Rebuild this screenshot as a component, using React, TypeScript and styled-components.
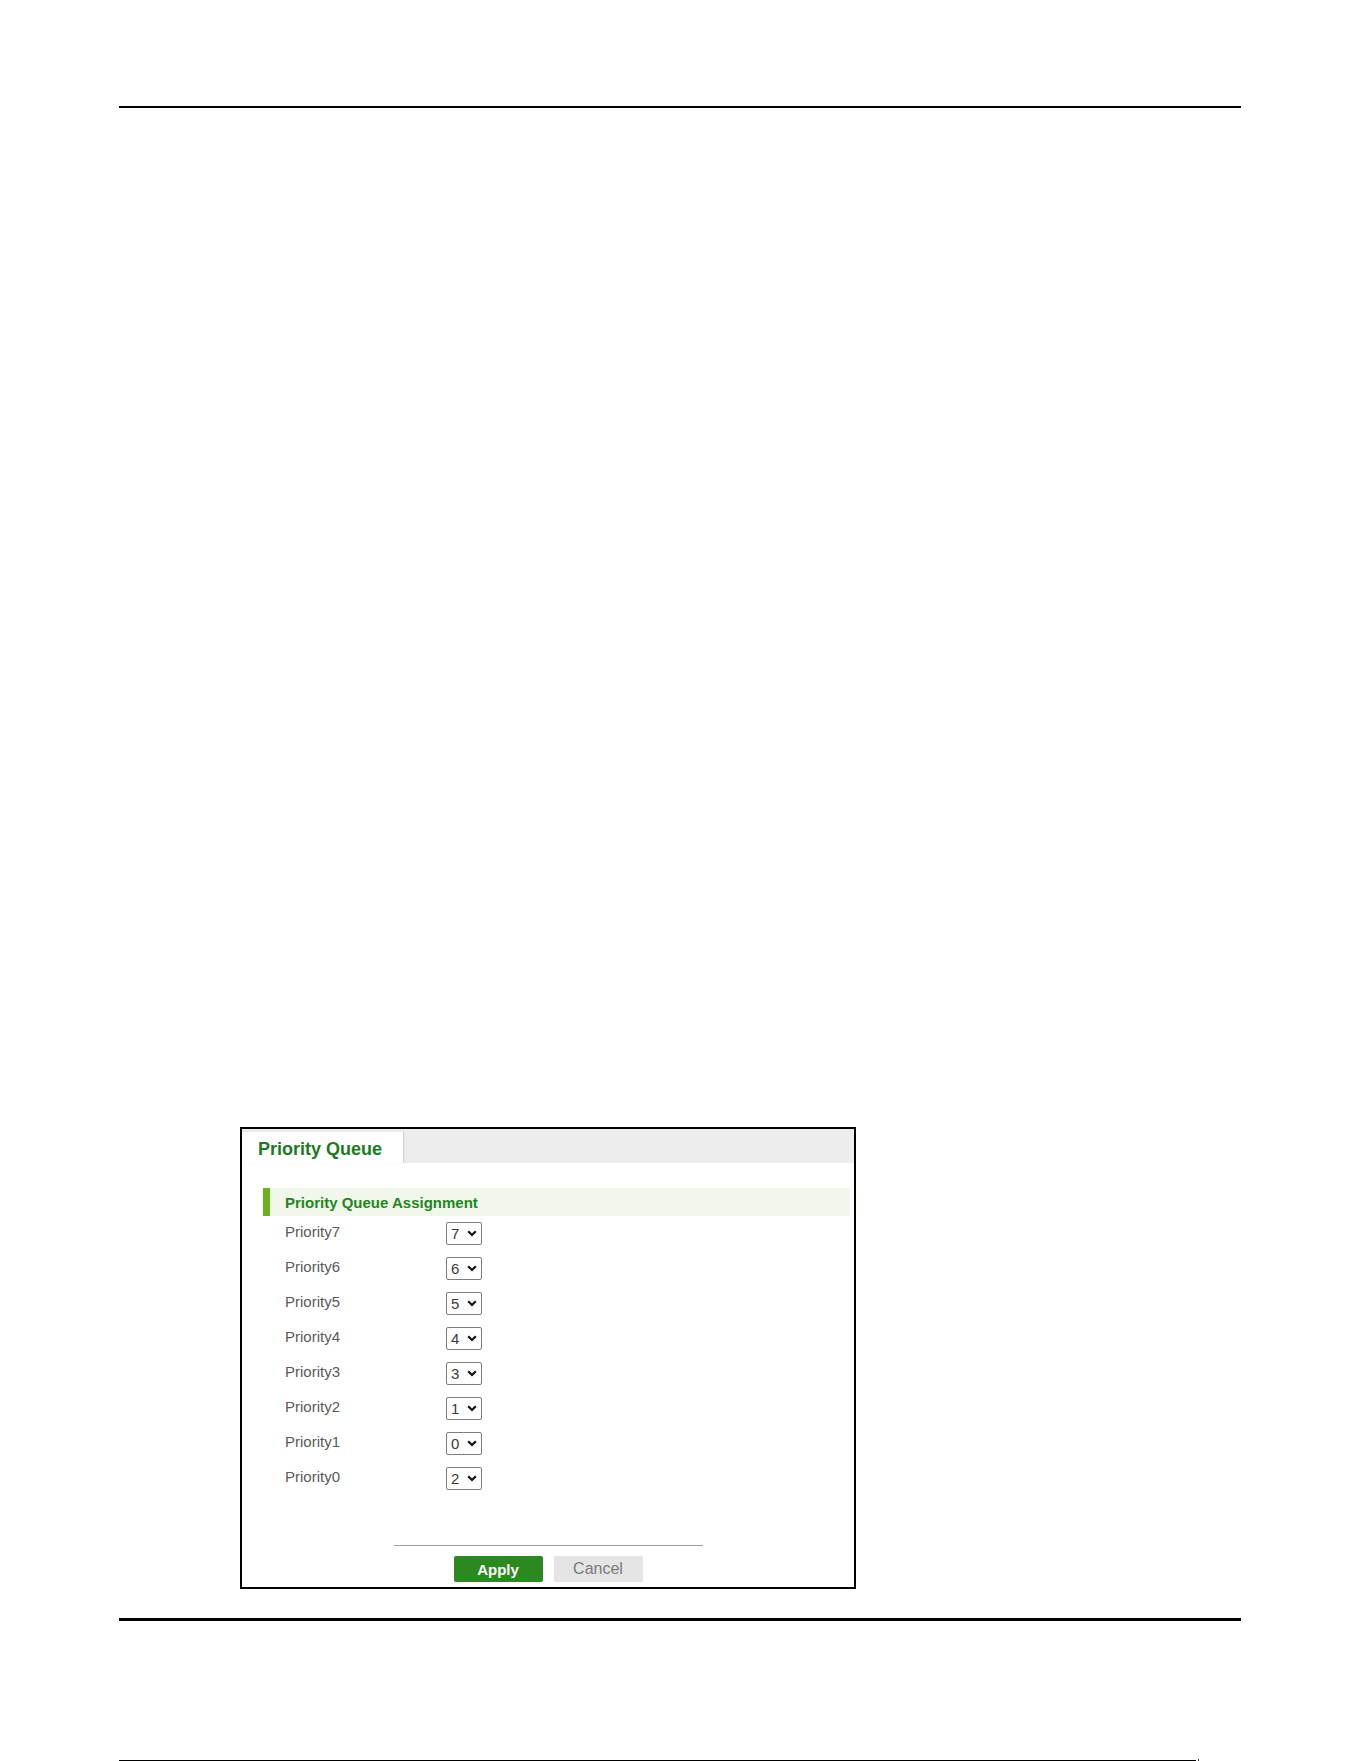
import React from 'react';
import styled, { createGlobalStyle } from 'styled-components';

const GlobalStyle = createGlobalStyle`
  html, body {
    margin: 0;
    padding: 0;
    background: #ffffff;
  }
  body {
    font-family: 'Liberation Sans', Arial, sans-serif;
  }
`;

const priorities = [
  { label: 'Priority7', value: '7' },
  { label: 'Priority6', value: '6' },
  { label: 'Priority5', value: '5' },
  { label: 'Priority4', value: '4' },
  { label: 'Priority3', value: '3' },
  { label: 'Priority2', value: '1' },
  { label: 'Priority1', value: '0' },
  { label: 'Priority0', value: '2' },
];

const Page = styled.div`
  width: 1361px;
  height: 1761px;
  box-sizing: border-box;
  padding: 106px 120px 0 119px;
  display: flex;
  flex-direction: column;
`;

const Rule = styled.div<{ $thick: number; $width?: number }>`
  height: ${(p) => p.$thick}px;
  width: ${(p) => (p.$width ? `${p.$width}px` : '100%')};
  background: #000;
  flex-shrink: 0;
`;

const Figure = styled.div`
  margin: 1019px 0 0 121px;
  width: 616px;
  height: 462px;
  box-sizing: border-box;
  border: 2px solid #000;
  display: flex;
  flex-direction: column;
`;

const TabBar = styled.div`
  height: 34px;
  background: #ededed;
  display: flex;
  align-items: flex-end;
`;

const Tab = styled.div`
  width: 161px;
  height: 31px;
  background: #fff;
  box-shadow: 1px 0 1px rgba(0, 0, 0, 0.12);
  box-sizing: border-box;
  padding: 6px 0 0 16px;
  color: #1d7a1d;
  font-size: 18px;
  font-weight: 700;
  line-height: 22px;
`;

const Body = styled.div`
  flex: 1;
  display: flex;
  flex-direction: column;
  padding: 25px 4px 5px 21px;
`;

const SectionHead = styled.div`
  height: 28px;
  background: #f1f8eb;
  border-left: 7px solid #6ab31c;
  display: flex;
  align-items: center;
  padding-left: 15px;
  color: #23861d;
  font-size: 15px;
  font-weight: 700;
`;

const Row = styled.div`
  height: 35px;
  display: flex;
  align-items: center;
  padding-left: 22px;
`;

const Label = styled.span`
  width: 161px;
  margin-top: -4px;
  color: #5a5a5a;
  font-size: 15px;
`;

const Select = styled.div`
  width: 36px;
  height: 23px;
  box-sizing: border-box;
  border: 1px solid #7d7d7d;
  border-radius: 2px;
  display: flex;
  align-items: center;
  justify-content: space-between;
  padding: 0 4px 0 4px;
  color: #3a3a3a;
  font-size: 15px;
`;

const Spacer = styled.div`
  flex: 1;
`;

const Footer = styled.div`
  display: flex;
  flex-direction: column;
  align-items: center;
  margin-right: -4px;
  margin-left: -21px;
`;

const Divider = styled.div`
  width: 309px;
  height: 1px;
  background: #a0a0a0;
  margin-bottom: 10px;
`;

const Buttons = styled.div`
  display: flex;
  gap: 11px;
`;

const Button = styled.button<{ $primary?: boolean }>`
  width: 89px;
  height: 26px;
  border: none;
  border-radius: 2px;
  padding: 0;
  font-family: 'Liberation Sans', Arial, sans-serif;
  font-size: ${(p) => (p.$primary ? 15 : 16)}px;
  font-weight: ${(p) => (p.$primary ? 700 : 400)};
  background: ${(p) => (p.$primary ? '#2b8a1f' : '#e5e5e5')};
  color: ${(p) => (p.$primary ? '#fff' : '#7a7a7a')};
`;

const BottomEdge = styled.div`
  margin-top: auto;
  display: flex;
  align-items: flex-end;
  gap: 2px;
`;

const Dot = styled.div`
  width: 1px;
  height: 2px;
  background: #333;
`;

const Chevron = () => (
  <svg width="10" height="7" viewBox="0 0 10 7">
    <path d="M1.2 1.2 L5 5 L8.8 1.2" fill="none" stroke="#111" strokeWidth="2.2" />
  </svg>
);

export default function App() {
  return (
    <>
      <GlobalStyle />
      <Page>
        <Rule $thick={2} />
        <Figure>
          <TabBar>
            <Tab>Priority Queue</Tab>
          </TabBar>
          <Body>
            <SectionHead>Priority Queue Assignment</SectionHead>
            {priorities.map((p) => (
              <Row key={p.label}>
                <Label>{p.label}</Label>
                <Select>
                  <span>{p.value}</span>
                  <Chevron />
                </Select>
              </Row>
            ))}
            <Spacer />
            <Footer>
              <Divider />
              <Buttons>
                <Button $primary>Apply</Button>
                <Button>Cancel</Button>
              </Buttons>
            </Footer>
          </Body>
        </Figure>
        <Rule $thick={3} style={{ marginTop: 29 }} />
        <BottomEdge>
          <Rule $thick={1} $width={1077} />
          <Dot />
        </BottomEdge>
      </Page>
    </>
  );
}
